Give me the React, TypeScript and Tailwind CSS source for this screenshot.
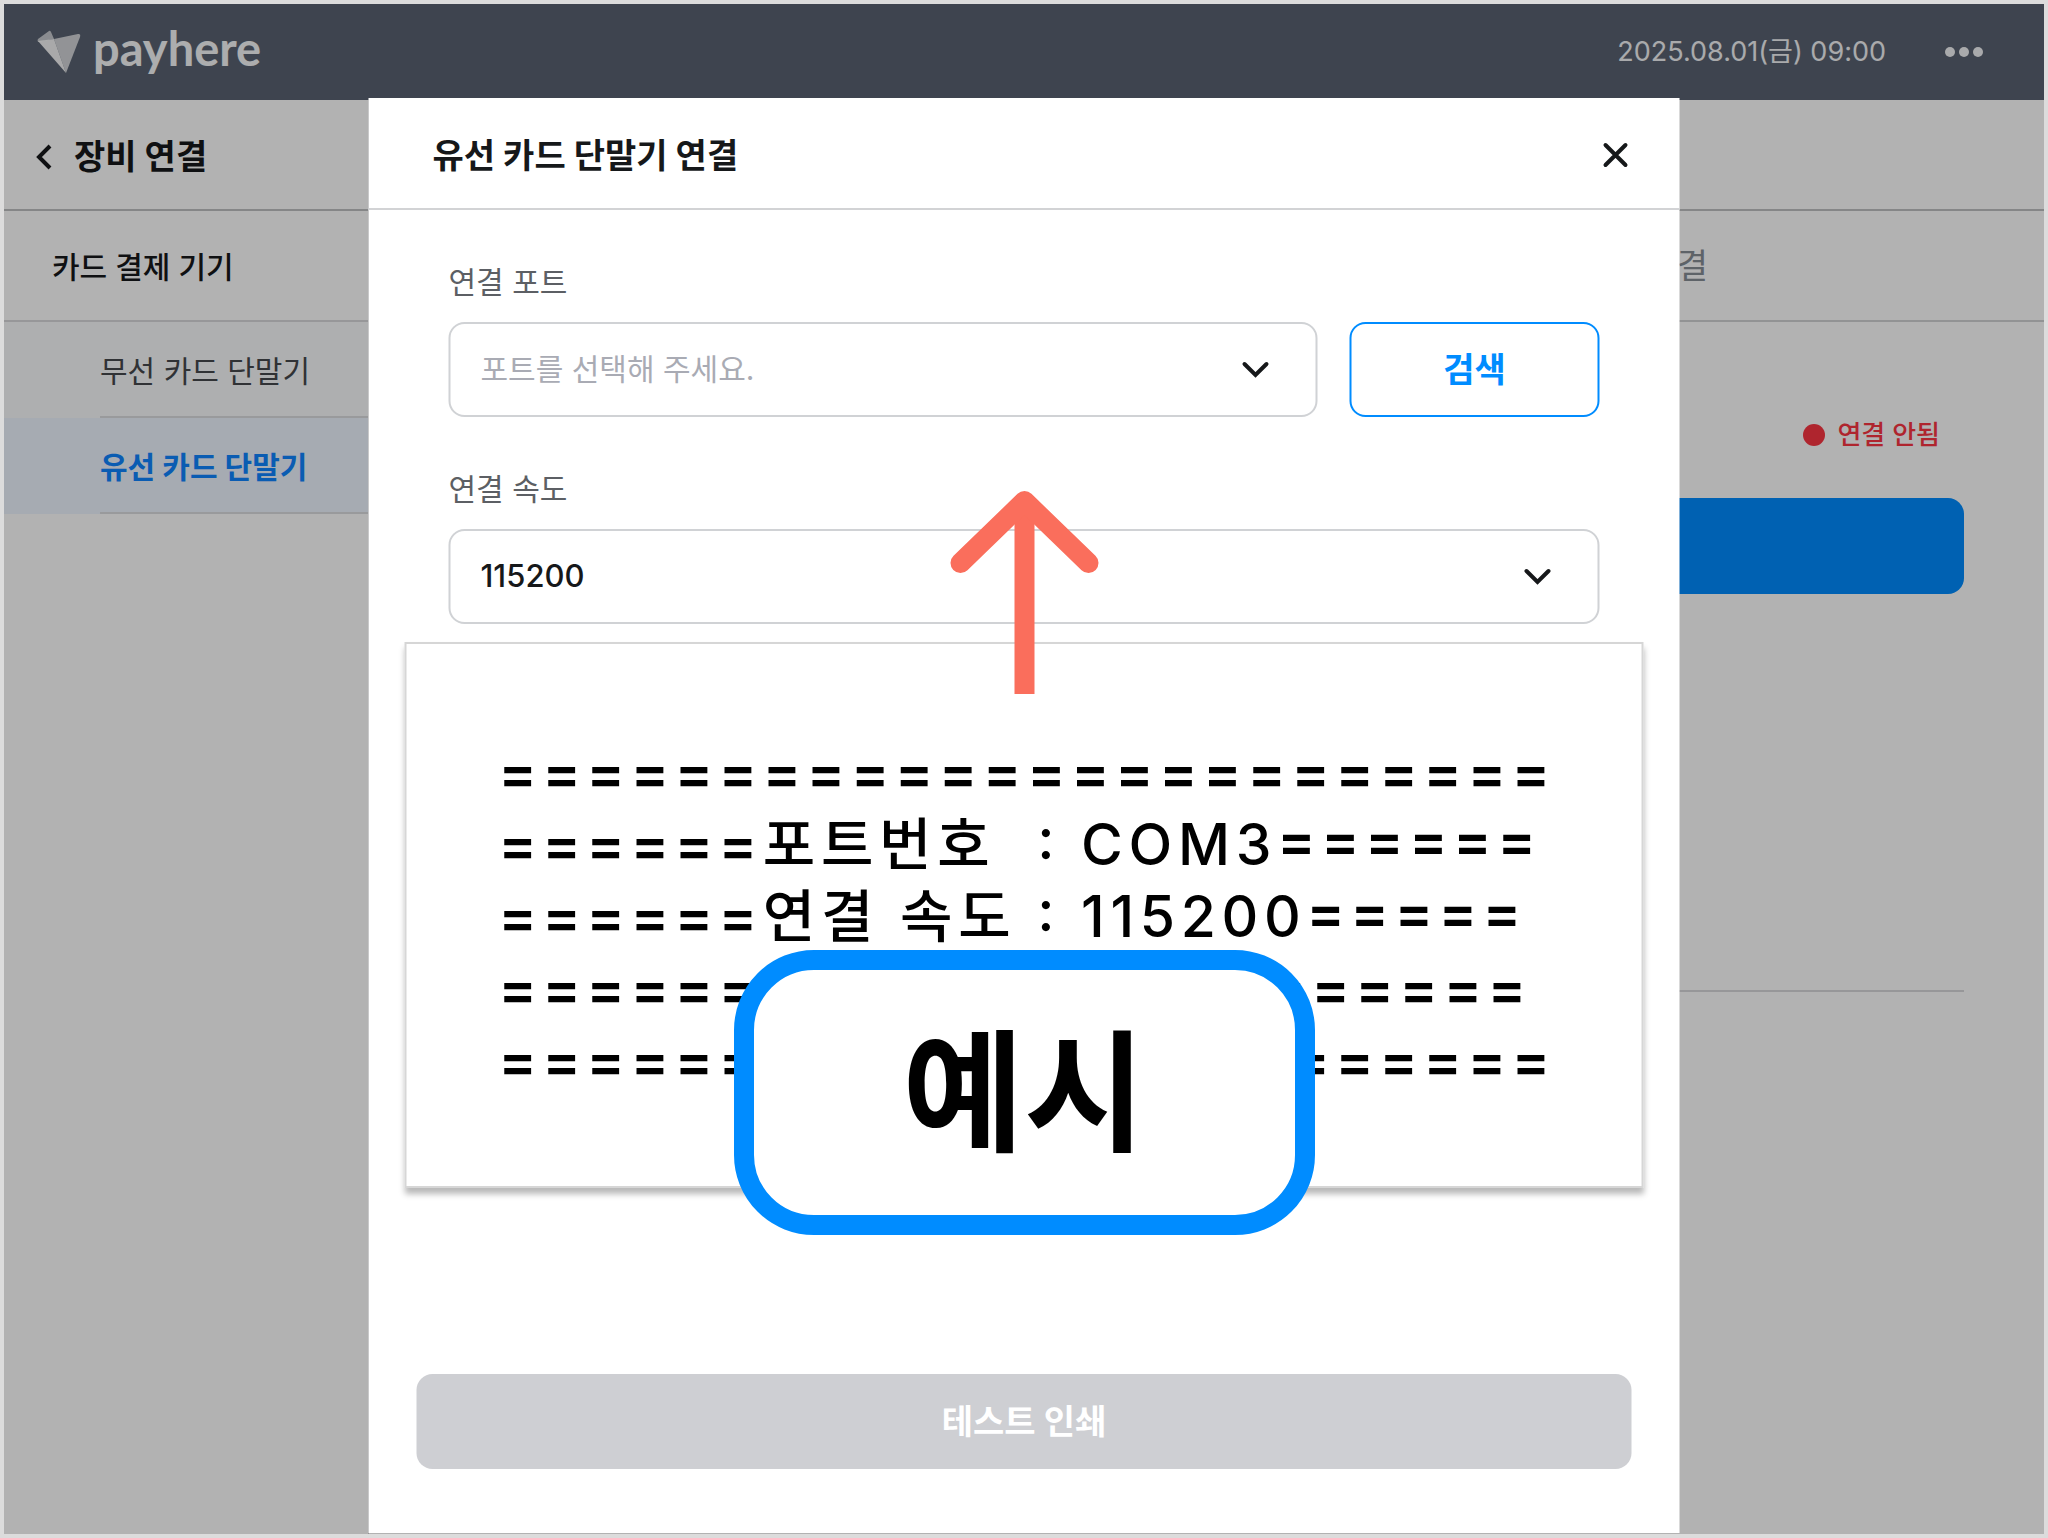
import type { ReactNode } from "react";

const RULE = "=".repeat(24);
const SHORT_RULE = `${"=".repeat(11)} ${"=".repeat(12)}`;

function Logo() {
  return (
    <div className="flex items-center gap-3">
      <svg viewBox="0 0 44 44" className="h-11 w-11" aria-hidden="true">
        <path d="M1 9 L12 1 Q13 0 14 2 L17 9 L1 12 Q0 10 1 9Z" fill="#fff" fillOpacity="0.66" />
        <path d="M17 9 L41 4 Q44 3.500 43 7 L29 43Z" fill="#fff" fillOpacity="0.72" />
        <path d="M1 11 L17 9 L29 43Z" fill="#fff" fillOpacity="0.92" />
      </svg>
      <span className="pb-2 font-[Lato] text-[47px] leading-[48px] font-bold text-[#f6f8fa]">payhere</span>
    </div>
  );
}

function Chevron() {
  return (
    <svg
      viewBox="0 0 28 18"
      className="pointer-events-none absolute top-1/2 right-12 h-[18px] w-7 -translate-y-1/2"
      fill="none"
      stroke="#16181a"
      strokeWidth="4"
      aria-hidden="true"
    >
      <path d="M3 3 L14 14 L25 3" strokeLinecap="round" />
    </svg>
  );
}

type FieldProps = { id: string; label: string; tone: string; option: string; action?: ReactNode };

function Field({ id, label, tone, option, action }: FieldProps) {
  return (
    <div className="flex flex-col gap-4">
      <label htmlFor={id} className="text-[30px] leading-[48px] text-[#5c5f64]">
        {label}
      </label>
      <div className="flex gap-8">
        <div className="relative flex-1">
          <select
            id={id}
            className={`h-[95px] w-full appearance-none rounded-2xl border-2 border-[#d0d2d5] bg-white px-[30px] ${tone}`}
          >
            <option>{option}</option>
          </select>
          <Chevron />
        </div>
        {action}
      </div>
    </div>
  );
}

function Receipt() {
  return (
    <div className="relative mx-9 mt-[18px] flex h-[546px] flex-col justify-center border-2 border-[#d6d6d6] bg-white px-[92px] pt-[3px] shadow-[0_6px_6px_rgba(0,0,0,0.28)]">
      <div className="text-[57px] leading-[72px] font-medium tracking-widest whitespace-pre text-black">
        <p className="font-semibold">{RULE}</p>
        <p>
          <span className="font-semibold">======</span>포트번호&nbsp;{" "}
          <span className="[font-feature-settings:'case']">
            : COM3<span className="font-semibold">======</span>
          </span>
        </p>
        <p>
          <span className="font-semibold">======</span>연결 속도{" "}
          <span className="[font-feature-settings:'case']">
            : 115200<span className="font-semibold">=====</span>
          </span>
        </p>
        <p className="font-semibold">{SHORT_RULE}</p>
        <p className="font-semibold">{RULE}</p>
      </div>
      <svg
        viewBox="0 0 150 206"
        className="absolute -top-[156px] left-1/2 h-[206px] w-[150px] -translate-x-1/2"
        fill="none"
        stroke="#fa6e5c"
        strokeWidth="20"
        aria-hidden="true"
      >
        <path d="M75 14 V206" />
        <path d="M11 75 L75 13 L139 75" strokeLinecap="round" strokeLinejoin="round" />
      </svg>
      <div className="absolute top-[306px] left-1/2 flex h-[285px] w-[581px] -translate-x-1/2 items-center justify-center rounded-[80px] border-[20px] border-[#008cff] bg-white text-[132px] leading-none font-bold text-black">
        예시
      </div>
    </div>
  );
}

function Dialog() {
  return (
    <section
      role="dialog"
      aria-labelledby="dialog-title"
      className="absolute top-[94px] bottom-px left-1/2 flex w-[1311px] max-w-full -translate-x-1/2 flex-col bg-white"
    >
      <header className="flex h-28 shrink-0 items-center justify-between border-b-2 border-[#d2d3d5] pt-1 pr-[46px] pl-16">
        <h1 id="dialog-title" className="text-[34px] font-bold text-[#16181a]">
          유선 카드 단말기 연결
        </h1>
        <button type="button" aria-label="닫기" className="p-1">
          <svg viewBox="0 0 28 28" className="h-7 w-7" fill="none" stroke="#16181a" strokeWidth="4" strokeLinecap="round">
            <path d="M4 4 L24 24 M24 4 L4 24" />
          </svg>
        </button>
      </header>
      <form className="flex flex-1 flex-col">
        <div className="flex flex-col gap-12 px-20 pt-12">
          <Field
            id="port"
            label="연결 포트"
            tone="text-[30px] text-[#a9abb4]"
            option="포트를 선택해 주세요."
            action={
              <button
                type="button"
                className="h-[95px] w-[250px] rounded-2xl border-2 border-[#008cff] text-[34px] font-bold text-[#008cff]"
              >
                검색
              </button>
            }
          />
          <Field id="speed" label="연결 속도" tone="text-[31px] font-medium text-[#16181a]" option="115200" />
        </div>
        <Receipt />
        <div className="mt-auto px-12 pb-16">
          <button type="button" className="h-[95px] w-full rounded-2xl bg-[#cecfd3] text-[34px] font-bold text-white">
            테스트 인쇄
          </button>
        </div>
      </form>
    </section>
  );
}

export default function App() {
  return (
    <div className="relative flex min-h-screen flex-col border-4 border-[#dcdcdc] bg-white font-['Inter','Noto_Sans_CJK_KR',sans-serif]">
      <header className="flex h-24 items-center justify-between bg-[#596271] pr-[58px] pl-[33px]">
        <Logo />
        <div className="flex items-center gap-14 text-[27px] text-gray-100">
          <time dateTime="2025-08-01T09:00">2025.08.01(금) 09:00</time>
          <button type="button" aria-label="더보기">
            <svg viewBox="0 0 44 12" className="h-3 w-11" fill="currentColor">
              <circle cx="8" cy="6" r="5" />
              <circle cx="22" cy="6" r="5" />
              <circle cx="36" cy="6" r="5" />
            </svg>
          </button>
        </div>
      </header>

      <div className="flex flex-1">
        <aside className="w-[365px] shrink-0 border-r border-[#d2d3d5]">
          <button
            type="button"
            className="flex h-[111px] w-full items-center gap-5 border-b-2 border-[#bfc0c2] pt-1 pl-[30px] text-[34px] font-bold text-[#16181a]"
          >
            <svg viewBox="0 0 20 28" className="h-7 w-5" fill="none" stroke="currentColor" strokeWidth="4">
              <path d="M16 3 L5 14 L16 25" />
            </svg>
            장비 연결
          </button>
          <h2 className="flex h-[111px] items-center border-b-2 border-[#d8d9db] pt-1 pl-12 text-[30px] font-medium text-[#16181a]">
            카드 결제 기기
          </h2>
          <nav>
            <a href="#wireless" className="block bg-[#fafbfc] pl-24 text-[30px] text-[#45484d]">
              <span className="flex h-24 items-center border-b-2 border-[#dcdde0] pt-1">무선 카드 단말기</span>
            </a>
            <a href="#wired" className="block bg-[#eef5ff] pl-24 text-[30px] font-bold text-[#0f84ff]">
              <span className="flex h-24 items-center border-b-2 border-[#dcdde0] pt-1">유선 카드 단말기</span>
            </a>
          </nav>
        </aside>

        <main className="flex-1">
          <div className="h-[111px] border-b-2 border-[#bfc0c2]" />
          <div className="flex h-[111px] items-center justify-end border-b-2 border-[#d2d3d5] pr-[336px] text-[34px] text-[#878e96]">
            연결
          </div>
          <div className="mx-20 flex h-[670px] flex-col gap-10 border-b-2 border-[#d8d9db] pt-[90px]">
            <p className="flex items-center justify-end gap-3 pr-6 text-[26px] leading-[46px] font-medium text-[#fb3643]">
              <span className="h-[22px] w-[22px] rounded-full bg-[#fb3643]" />
              연결 안됨
            </p>
            <button type="button" aria-label="연결하기" className="h-24 w-full rounded-2xl bg-[#008cff]" />
          </div>
        </main>
      </div>

      <div className="absolute inset-0 bg-black/30" />
      <Dialog />
    </div>
  );
}
